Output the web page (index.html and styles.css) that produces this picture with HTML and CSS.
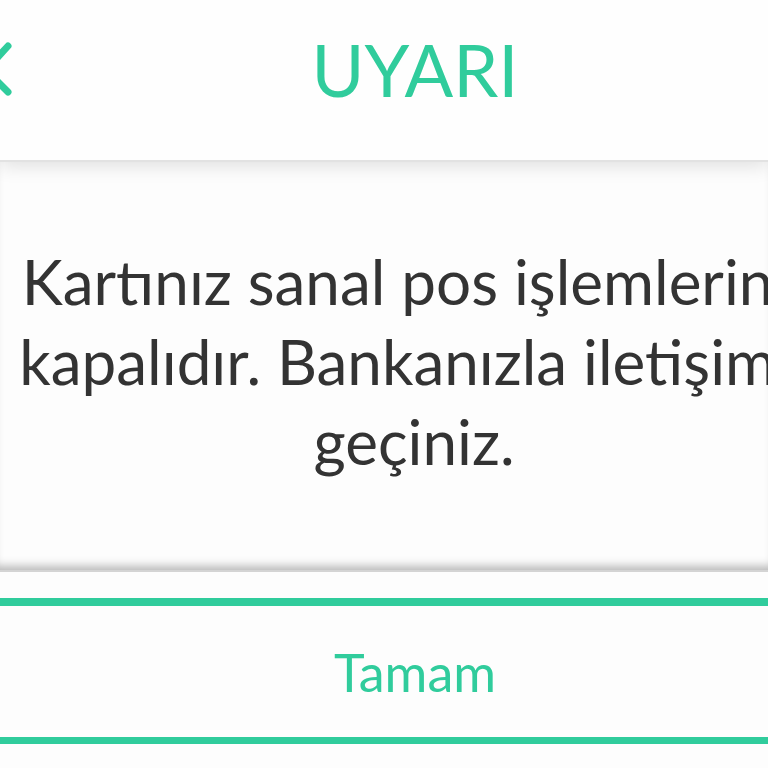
FILE: index.html
```html
<!DOCTYPE html>
<html lang="tr">
<head>
<meta charset="utf-8">
<link rel="stylesheet" href="styles.css">
</head>
<body>
<div class="screen">
  <header class="header">
    <svg class="back" width="20" height="60" viewBox="0 0 20 60"><path d="M8 6 L-14 30 L8 52" fill="none" stroke="#30cc9c" stroke-width="7" stroke-linecap="round" stroke-linejoin="round"/></svg>
    <h1 class="title">UYARI</h1>
  </header>
  <main class="content">
    <p class="message">Kartınız sanal pos işlemlerine<br>kapalıdır. Bankanızla iletişime<br>geçiniz.</p>
  </main>
  <div class="gap"></div>
  <footer class="footer">
    <button class="ok">Tamam</button>
  </footer>
</div>
</body>
</html>
```
FILE: styles.css
```css
html, body {
  margin: 0;
  padding: 0;
  background: #fdfdfd;
  overflow: hidden;
}
.screen {
  width: 768px;
  height: 768px;
  overflow: hidden;
  display: flex;
  flex-direction: column;
  font-family: Lato, "Noto Sans", sans-serif;
}
.header {
  position: relative;
  height: 160px;
  flex: none;
  display: flex;
  align-items: center;
  justify-content: center;
  background: #fefefe;
  z-index: 2;
  box-shadow: 0 2px 0 #e2e2e2, 0 6px 18px rgba(0,0,0,0.12);
}
.back {
  position: absolute;
  left: 0;
  top: 40px;
}
.title {
  margin: 0 0 22px 0;
  font-weight: 400;
  font-size: 72px;
  color: #30cc9c;
  padding-left: 62px;
}
.content {
  height: 412px;
  flex: none;
  display: flex;
  align-items: center;
  background: #fdfdfd;
  box-shadow: inset 0 -10px 10px -6px rgba(0,0,0,0.28);
  border-bottom: 2px solid #d4d4d4;
  box-sizing: border-box;
}
.message {
  margin: 0 0 8px 14px;
  width: 800px;
  flex: none;
  text-align: center;
  white-space: nowrap;
  font-size: 62px;
  line-height: 80px;
  color: #333333;
}
.gap {
  height: 26px;
  flex: none;
}
.footer {
  flex: none;
  border-top: 8px solid #30cc9c;
  border-bottom: 7px solid #30cc9c;
  height: 131px;
  display: flex;
}
.ok {
  flex: 1;
  border: 0;
  background: transparent;
  font-family: inherit;
  font-size: 52px;
  color: #30cc9c;
  padding: 0 0 0 62px;
}
```
